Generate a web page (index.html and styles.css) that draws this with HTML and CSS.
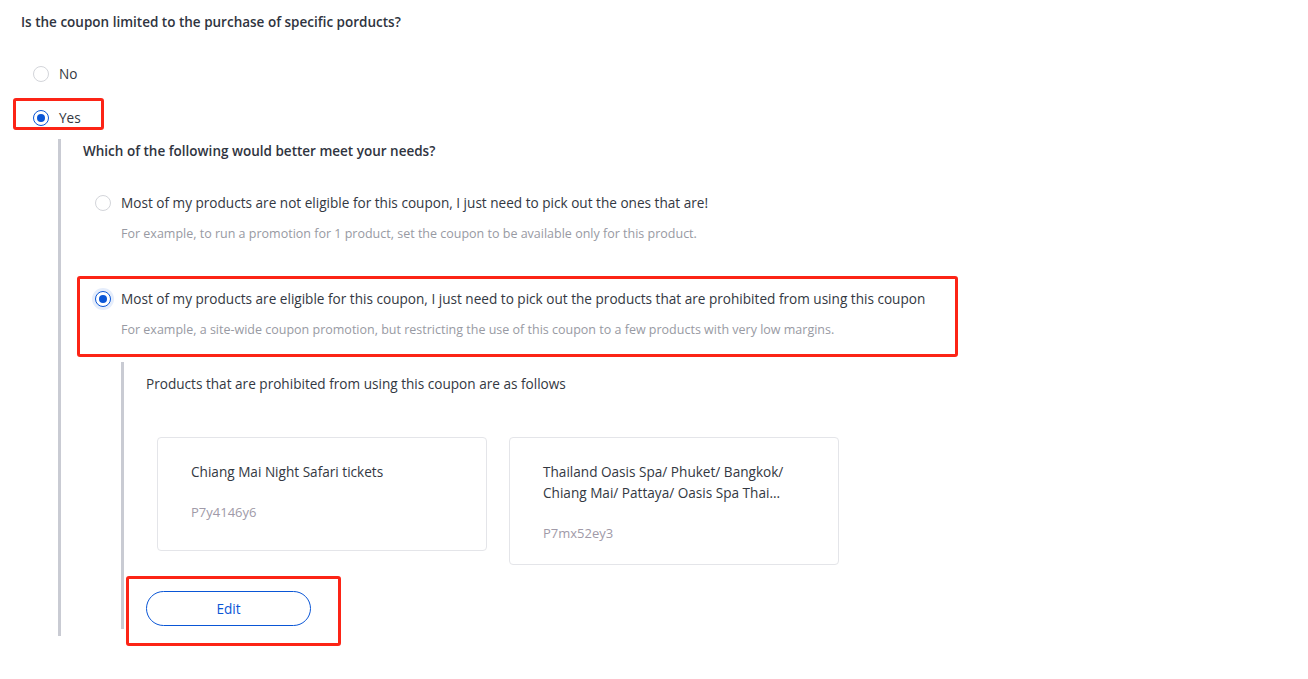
FILE: index.html
```html
<!DOCTYPE html>
<html lang="en">
<head>
<meta charset="utf-8">
<title>Coupon products</title>
<link rel="stylesheet" href="styles.css">
</head>
<body>
<div class="page">
  <div class="title">Is the coupon limited to the purchase of specific porducts?</div>

  <div class="radio-row row-no">
    <span class="radio"></span>
    <span class="label">No</span>
  </div>
  <div class="radio-row row-yes mark mark-yes">
    <span class="radio checked"></span>
    <span class="label">Yes</span>
  </div>

  <div class="branch branch-1">
    <div class="subtitle">Which of the following would better meet your needs?</div>

    <div class="option opt-1">
      <div class="radio-row">
        <span class="radio"></span>
        <span class="label">Most of my products are not eligible for this coupon, I just need to pick out the ones that are!</span>
      </div>
      <div class="desc">For example, to run a promotion for 1 product, set the coupon to be available only for this product.</div>
    </div>

    <div class="option opt-2 mark mark-opt">
      <div class="radio-row">
        <span class="radio checked focus"></span>
        <span class="label">Most of my products are eligible for this coupon, I just need to pick out the products that are prohibited from using this coupon</span>
      </div>
      <div class="desc">For example, a site-wide coupon promotion, but restricting the use of this coupon to a few products with very low margins.</div>
    </div>

    <div class="branch branch-2">
      <div class="plain">Products that are prohibited from using this coupon are as follows</div>
      <div class="cards">
        <div class="card">
          <div class="card-title">Chiang Mai Night Safari tickets</div>
          <div class="card-code">P7y4146y6</div>
        </div>
        <div class="card card-tall">
          <div class="card-title">Thailand Oasis Spa/ Phuket/ Bangkok/<br>Chiang Mai/ Pattaya/ Oasis Spa Thai...</div>
          <div class="card-code">P7mx52ey3</div>
        </div>
      </div>
      <div class="edit-wrap mark mark-edit">
        <button class="btn-edit" type="button">Edit</button>
      </div>
    </div>
  </div>
</div>
</body>
</html>
```

FILE: styles.css
```css
*, *::before, *::after { box-sizing: border-box; }

html, body {
  margin: 0;
  padding: 0;
  background: #ffffff;
}

body {
  font-family: "Open Sans", "Noto Sans", "Liberation Sans", sans-serif;
  font-size: 13.6px;
  color: #333842;
}

.page {
  padding: 12px 0 0 21px;
  width: 1308px;
  height: 679px;
  overflow: hidden;
}

.title {
  font-weight: 600;
  font-size: 13.5px;
  line-height: 20px;
  color: #2f3440;
}

.radio-row {
  display: flex;
  align-items: center;
  height: 20px;
  line-height: 20px;
}

.row-no {
  margin-top: 32px;
  padding-left: 12px;
}

.row-yes {
  margin-top: 24px;
  padding-left: 12px;
  width: 84px;
}

.radio {
  flex: none;
  width: 16px;
  height: 16px;
  border-radius: 50%;
  border: 1px solid #d3d5da;
  background: #fff;
  position: relative;
  margin-right: 10px;
}

.radio.checked {
  border-color: #0a56d6;
}

.radio.checked::after {
  content: "";
  position: absolute;
  left: 3px;
  top: 3px;
  width: 8px;
  height: 8px;
  border-radius: 50%;
  background: #0a56d6;
}

.radio.focus {
  box-shadow: 0 0 0 3px #e5edfb;
}

.label {
  white-space: nowrap;
}

.branch {
  border-left: 3px solid #c9cbd3;
}

.branch-1 {
  margin-left: 37px;
  margin-top: 11px;
  padding: 2px 0 0 22px;
  height: 497px;
}

.subtitle {
  font-weight: 600;
  font-size: 13.5px;
  line-height: 20px;
  color: #2f3440;
}

.option .radio-row {
  padding-left: 12px;
}

.opt-1 {
  margin-top: 32px;
}

.opt-2 {
  margin-top: 46px;
  width: 877px;
}

.desc {
  margin-top: 12px;
  padding-left: 38px;
  font-size: 12.5px;
  line-height: 18px;
  color: #989aa3;
  white-space: nowrap;
}

.branch-2 {
  margin-left: 38px;
  margin-top: 23px;
  padding: 12px 0 3px 22px;
}

.plain {
  line-height: 20px;
}

.cards {
  display: flex;
  align-items: flex-start;
  gap: 22px;
  margin-top: 43px;
  margin-left: 11px;
}

.card {
  width: 330px;
  border: 1px solid #e4e5e9;
  border-radius: 4px;
  padding: 23px 33px 28px;
}

.card-tall {
  padding-bottom: 21px;
}

.card-title {
  line-height: 21px;
  color: #333842;
}

.card-code {
  margin-top: 20px;
  line-height: 20px;
  font-size: 13px;
  color: #a09aa8;
}

.edit-wrap {
  margin-top: 26px;
  width: 165px;
}

.btn-edit {
  display: block;
  width: 165px;
  height: 35px;
  border: 1px solid #0a56d6;
  border-radius: 18px;
  background: #fff;
  color: #0a56d6;
  font-family: inherit;
  font-size: 13.6px;
  padding: 0;
  cursor: pointer;
}

/* red annotation boxes drawn over content */
.mark {
  position: relative;
}

.mark::before {
  content: "";
  position: absolute;
  border: 3px solid #fc2416;
  border-radius: 3px;
  pointer-events: none;
}

.mark-yes::before {
  left: -8px;
  top: -10px;
  width: 91px;
  height: 32px;
}

.mark-opt::before {
  left: -6px;
  top: -13px;
  width: 881px;
  height: 81px;
}

.mark-edit::before {
  left: -20px;
  top: -15px;
  width: 215px;
  height: 70px;
}
```
